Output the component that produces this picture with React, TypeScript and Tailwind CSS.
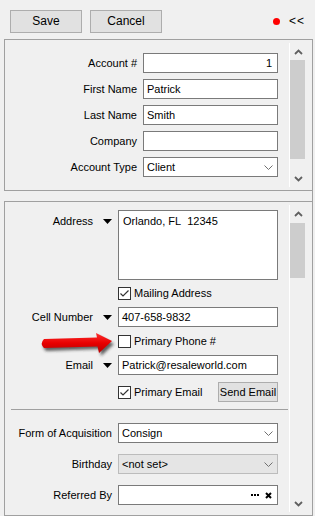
import React from "react";

function Chevron({ up = false }: { up?: boolean }) {
  return (
    <svg width="9" height="6" viewBox="0 0 9 6" aria-hidden="true">
      <path
        d={up ? "M1 5 L4.5 1.5 L8 5" : "M1 1 L4.5 4.5 L8 1"}
        fill="none"
        stroke="#606060"
        strokeWidth="1.8"
      />
    </svg>
  );
}

function DropChevron() {
  return (
    <svg width="9" height="5" viewBox="0 0 9 5" aria-hidden="true">
      <path d="M0.5 0.5 L4.5 4.5 L8.5 0.5" fill="none" stroke="#707070" strokeWidth="1" />
    </svg>
  );
}

function ScrollBar({ thumbTop, thumbHeight }: { thumbTop: number; thumbHeight: number }) {
  return (
    <div className="relative my-[3px] w-[17px] shrink-0 border-l border-white">
      <div className="flex h-[17px] items-center justify-center">
        <Chevron up />
      </div>
      <div
        className="absolute left-0 w-[15px] bg-[#cdcdcd]"
        style={{ top: thumbTop, height: thumbHeight }}
      />
      <div className="absolute bottom-0 left-0 flex h-[17px] w-[16px] items-center justify-center">
        <Chevron />
      </div>
    </div>
  );
}

function Triangle() {
  return (
    <svg width="9" height="5" viewBox="0 0 9 5" aria-hidden="true">
      <path d="M0 0 L9 0 L4.5 5 Z" fill="#000" />
    </svg>
  );
}

function CheckBox({ checked }: { checked?: boolean }) {
  return (
    <div className="flex h-[13px] w-[13px] shrink-0 items-center justify-center border border-[#333] bg-white">
      {checked && (
        <svg width="11" height="11" viewBox="0 0 11 11" aria-hidden="true">
          <path d="M1.5 5.5 L4 8 L9.5 2.5" fill="none" stroke="#333" strokeWidth="1.2" />
        </svg>
      )}
    </div>
  );
}

function Input({
  value,
  right,
  select,
  disabled,
  children,
}: {
  value?: string;
  right?: boolean;
  select?: boolean;
  disabled?: boolean;
  children?: React.ReactNode;
}) {
  return (
    <div
      className={`flex h-[20px] w-full items-center border px-[3px] ${
        disabled ? "border-[#bcbcbc] bg-[#e5e5e5]" : "border-[#7a7a7a] bg-white"
      } ${right ? "justify-end pr-[5px]" : ""}`}
    >
      {value && <span className={right ? "" : "flex-1"}>{value}</span>}
      {!value && !right && <span className="flex-1" />}
      {select && (
        <span className="mr-[1px] flex items-center">
          <DropChevron />
        </span>
      )}
      {children}
    </div>
  );
}

const topRows = [
  { label: "Account #", value: "1", right: true },
  { label: "First Name", value: "Patrick" },
  { label: "Last Name", value: "Smith" },
  { label: "Company", value: "" },
  { label: "Account Type", value: "Client", select: true },
];

function Row({
  label,
  arrow,
  children,
  className = "",
}: {
  label?: string;
  arrow?: boolean;
  children: React.ReactNode;
  className?: string;
}) {
  return (
    <div className={`flex items-center ${className}`}>
      <div className="flex w-[107px] shrink-0 items-center justify-end">
        {label && <span>{label}</span>}
        {arrow && (
          <span className="ml-[10px] flex items-center">
            <Triangle />
          </span>
        )}
      </div>
      <div className="ml-[6px] w-[160px]">{children}</div>
    </div>
  );
}

function RedArrow() {
  return (
    <svg
      className="pointer-events-none absolute left-0 top-0"
      width="315"
      height="516"
      viewBox="0 0 315 516"
      aria-hidden="true"
    >
      <defs>
        <linearGradient id="rg" x1="0" y1="0" x2="0" y2="1">
          <stop offset="0" stopColor="#ff3030" />
          <stop offset="0.5" stopColor="#e80000" />
          <stop offset="1" stopColor="#b80000" />
        </linearGradient>
        <filter id="blur" x="-20%" y="-50%" width="140%" height="200%">
          <feGaussianBlur stdDeviation="1.6" />
        </filter>
      </defs>
      <path
        d="M46 342 L99 340 L98 336 L114 344 L101 356 L100 349 L46 351 Q41 346.5 46 342 Z"
        fill="#222"
        opacity="0.7"
        filter="url(#blur)"
      />
      <path
        d="M44 339 L97 337.5 L96 333 L112 341 L99 353 L97.5 346.5 L44 348 Q39.5 343.5 44 339 Z"
        fill="url(#rg)"
      />
    </svg>
  );
}

export default function App() {
  return (
    <div className="relative h-[516px] w-[315px] overflow-hidden bg-[#f0f0f0] font-['Liberation_Sans',Arial,sans-serif] text-[11px] leading-[13px] text-black">
      {/* toolbar */}
      <div className="flex h-[39px] items-start pl-[10px] pt-[10px]">
        <button className="flex h-[23px] w-[72px] items-center justify-center border border-[#adadad] bg-[#e1e1e1] text-[12px]">
          Save
        </button>
        <button className="ml-[8px] flex h-[23px] w-[72px] items-center justify-center border border-[#adadad] bg-[#e1e1e1] text-[12px]">
          Cancel
        </button>
        <div className="ml-auto mr-[10px] flex h-[23px] items-center">
          <span className="h-[7px] w-[7px] rounded-full bg-[#ff0000]" />
          <span className="ml-[9px] text-[12px] tracking-[1px]">&lt;&lt;</span>
        </div>
      </div>

      {/* body */}
      <div className="h-[477px] w-[313px] border-r border-[#a0a0a0] pl-[4px]">
        {/* account panel */}
        <div className="flex h-[152px] border-y border-l border-[#a0a0a0]">
          <div className="flex flex-1 flex-col gap-[6px] pt-[13px]">
            {topRows.map((r) => (
              <div key={r.label} className="flex items-center">
                <div className="w-[132px] shrink-0 text-right">{r.label}</div>
                <div className="ml-[6px] w-[135px]">
                  <Input value={r.value} right={r.right} select={r.select} />
                </div>
              </div>
            ))}
          </div>
          <ScrollBar thumbTop={17} thumbHeight={99} />
          <div className="w-[6px] shrink-0" />
        </div>

        {/* contact panel */}
        <div className="mt-[10px] flex h-[315px] border-y border-l border-[#a0a0a0]">
          <div className="flex flex-1 flex-col pt-[8px]">
            <div className="flex items-start">
              <div className="flex w-[107px] shrink-0 items-center justify-end pt-[5px]">
                <span>Address</span>
                <span className="ml-[10px] flex items-center">
                  <Triangle />
                </span>
              </div>
              <div className="ml-[6px] h-[70px] w-[160px] border border-[#7a7a7a] bg-white px-[4px] pt-[4px]">
                Orlando, FL&nbsp;&nbsp;12345
              </div>
            </div>

            <Row className="mt-[7px] h-[13px]">
              <div className="flex items-center gap-[3px]">
                <CheckBox checked />
                <span>Mailing Address</span>
              </div>
            </Row>

            <Row label="Cell Number" arrow className="mt-[7px]">
              <Input value="407-658-9832" />
            </Row>

            <Row className="mt-[8px] h-[13px]">
              <div className="flex items-center gap-[3px]">
                <CheckBox />
                <span>Primary Phone #</span>
              </div>
            </Row>

            <Row label="Email" arrow className="mt-[7px]">
              <Input value="Patrick@resaleworld.com" />
            </Row>

            <Row className="mt-[7px]">
              <div className="flex items-center justify-between">
                <div className="flex items-center gap-[3px]">
                  <CheckBox checked />
                  <span>Primary Email</span>
                </div>
                <button className="flex h-[20px] w-[60px] items-center justify-center border border-[#adadad] bg-[#e1e1e1]">
                  Send Email
                </button>
              </div>
            </Row>

            <div className="ml-[6px] mt-[7px] h-px w-[277px] bg-[#a0a0a0]" />

            <Row label="Form of Acquisition" className="mt-[13px]">
              <Input value="Consign" select />
            </Row>

            <Row label="Birthday" className="mt-[11px]">
              <Input value="<not set>" select disabled />
            </Row>

            <Row label="Referred By" className="mt-[11px]">
              <Input>
                <span className="flex-1" />
                <span className="flex items-center gap-[1px]">
                  <span className="h-[2px] w-[2px] bg-black" />
                  <span className="h-[2px] w-[2px] bg-black" />
                  <span className="h-[2px] w-[2px] bg-black" />
                </span>
                <svg className="ml-[6px] mr-[2px]" width="7" height="7" viewBox="0 0 7 7" aria-hidden="true">
                  <path d="M1 1 L6 6 M6 1 L1 6" stroke="#000" strokeWidth="2" />
                </svg>
              </Input>
            </Row>
          </div>
          <ScrollBar thumbTop={18} thumbHeight={55} />
          <div className="w-[6px] shrink-0" />
        </div>
      </div>

      <RedArrow />
    </div>
  );
}
